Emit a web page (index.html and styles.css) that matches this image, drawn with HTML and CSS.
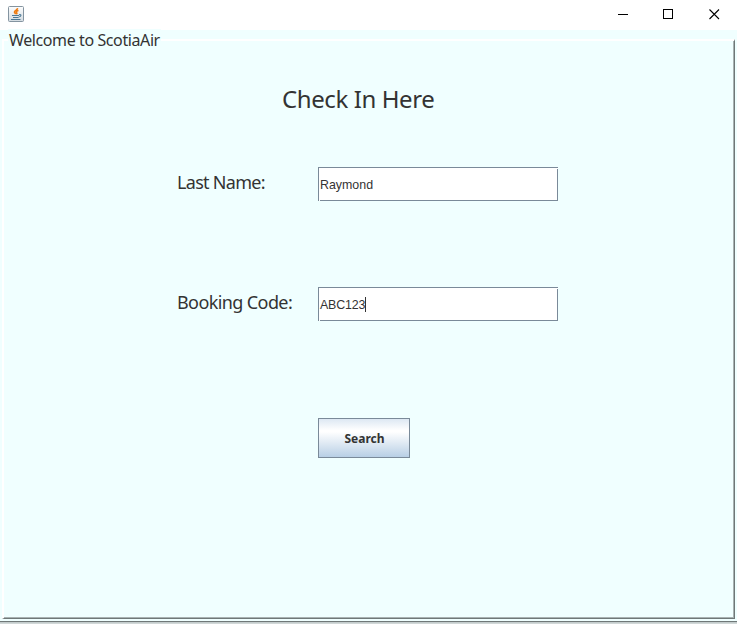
FILE: index.html
```html
<!DOCTYPE html>
<html lang="en">
<head>
<meta charset="utf-8">
<title>ScotiaAir</title>
<link rel="stylesheet" href="styles.css">
</head>
<body>
<div class="window">
  <header class="titlebar">
    <svg class="java" width="16" height="16" viewBox="0 0 16 16">
      <defs><linearGradient id="tile" x2="0" y2="1"><stop offset="0" stop-color="#fdfdfd"/><stop offset="1" stop-color="#d3dbe1"/></linearGradient></defs>
      <rect x=".5" y=".5" width="15" height="15" rx="1" fill="url(#tile)" stroke="#8494a0"/>
      <path d="M9.500 2.200C9.800 4.200 6 4.500 6.500 6.200c.2.8 1 1.200 1 2M10.500 4.500C8.500 5 7.800 5.800 8.700 6.700c.5.6.2 1.100-.3 1.600" fill="none" stroke="#ee7b10" stroke-width="1.600"/>
      <path d="M4 9.500h7M5 11.500h5.500M3 13.500h9.500M11 8.700c2.800-.5 2.500 2-.3 2.300" fill="none" stroke="#4c7895" stroke-width="1.100"/>
    </svg>
    <svg class="control" width="46" height="30"><path d="M18 14.500h10" stroke="#000"/></svg>
    <svg class="control" width="46" height="30"><rect x="17.500" y="9.500" width="9" height="9" fill="none" stroke="#000"/></svg>
    <svg class="control" width="46" height="30"><path d="M17.500 9.500l9.500 9.500m0-9.500l-9.500 9.500" stroke="#000" stroke-width="1.100"/></svg>
  </header>
  <main class="content">
    <section class="panel">
      <div class="legend"><span class="welcome">Welcome to ScotiaAir</span></div>
      <h1><span>Check In Here</span></h1>
      <form class="form">
        <span class="label last">Last Name:</span><div class="field">Raymond</div>
        <span class="label booking">Booking Code:</span><div class="field code">ABC123<i class="caret"></i></div>
        <button type="button"><span>Search</span></button>
      </form>
    </section>
  </main>
  <footer class="edge"></footer>
</div>
</body>
</html>
```
FILE: styles.css
```css
* { box-sizing: border-box; }
body { margin: 0; overflow: hidden; background: #fff; color: #333; font-family: "Noto Sans", sans-serif; }
.window { width: 737px; height: 624px; display: flex; flex-direction: column; }
.titlebar { height: 30px; flex: none; display: flex; background: #fff; }
.java { margin: 6px auto 0 8px; }
.control { display: block; }
.control:last-child { margin-right: -1px; }
.content { height: 591px; flex: none; background: #f0ffff; padding: 9px 2px 2px; }
.panel {
  height: 580px;
  border-top: 2px solid #fff;
  border-left: 2px solid #fff;
  border-right: 1px solid #6f7878;
  border-bottom: 1px solid #6f7878;
  box-shadow: inset -1px -1px #a8b2b2;
}
.legend { height: 40px; padding-left: 4px; margin-top: -12px; }
.welcome { display: inline-block; height: 22px; padding: 0 1px; background: #f0ffff; font-size: 16px; line-height: 22px; letter-spacing: -.4px; white-space: nowrap; }
h1 { margin: 10px 0 0 278px; height: 40px; font-size: 24px; line-height: 40px; font-weight: 400; letter-spacing: -.4px; }
.form { display: grid; grid-template-columns: 141px 240px; grid-template-rows: 34px 34px 40px; row-gap: 86px; margin: 48px 0 0 173px; }
.label { font-size: 18px; line-height: 31px; white-space: nowrap; letter-spacing: -.6px; }
.last { letter-spacing: -.7px; }
.field {
  display: flex; align-items: center; height: 34px; padding: 1px 0 0 2px;
  font: 12.400px "Liberation Sans", sans-serif;
  background:
    linear-gradient(#7a8a99, #7a8a99) 0 0 / 240px 1px no-repeat,
    linear-gradient(#7a8a99, #7a8a99) 0 0 / 1px 34px no-repeat,
    linear-gradient(#7a8a99, #7a8a99) 2px 33px / 238px 1px no-repeat,
    linear-gradient(#7a8a99, #7a8a99) 239px 2px / 1px 32px no-repeat,
    #fff;
}
.code { letter-spacing: -.15px; }
.caret { width: 1px; height: 15px; background: #333; }
button { grid-column: 2; width: 92px; height: 40px; margin-top: 11px; padding: 1px 0 0 1px; border: 1px solid #7a8a99; color: #333; background: linear-gradient(#dde8f3, #fff 30%, #fff 34%, #b8cfe5); font: bold 12px "Noto Sans", sans-serif; }
.edge { height: 3px; background: linear-gradient(#6f7878 1px, #bcc6c6 1px, #d8dede); }
```
